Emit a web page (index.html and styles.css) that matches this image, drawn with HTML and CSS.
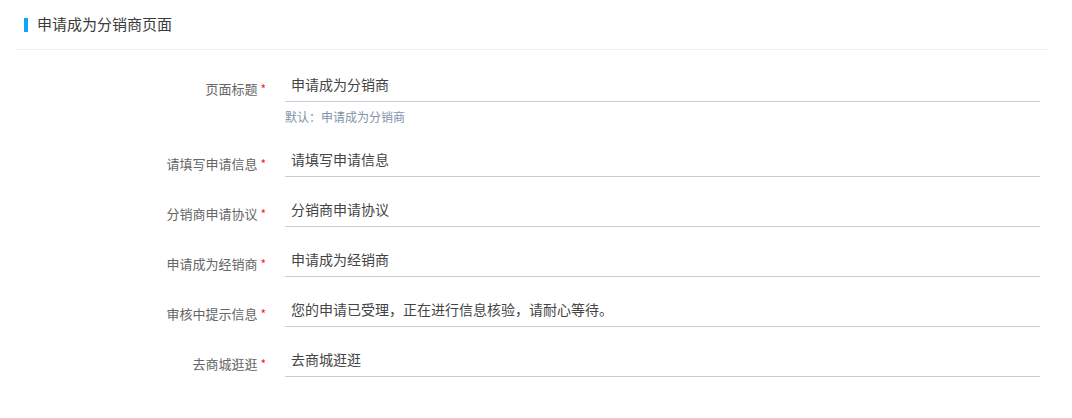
FILE: index.html
```html
<!DOCTYPE html>
<html>
  <head>
    <link rel="stylesheet" href="styles.css">
  </head>
  <body>
    <div class="page">
      <div class="page-header">
        <span class="bar"></span>
        <span class="title">申请成为分销商页面</span>
      </div>

      <form class="form">
        <div class="form-item">
          <label class="label">页面标题 <i>*</i></label>
          <div class="field">
            <input type="text" value="申请成为分销商" />
            <div class="hint">默认：申请成为分销商</div>
          </div>
        </div>
        <div class="form-item">
          <label class="label">请填写申请信息 <i>*</i></label>
          <div class="field"><input type="text" value="请填写申请信息" /></div>
        </div>
        <div class="form-item">
          <label class="label">分销商申请协议 <i>*</i></label>
          <div class="field"><input type="text" value="分销商申请协议" /></div>
        </div>
        <div class="form-item">
          <label class="label">申请成为经销商 <i>*</i></label>
          <div class="field"><input type="text" value="申请成为经销商" /></div>
        </div>
        <div class="form-item">
          <label class="label">审核中提示信息 <i>*</i></label>
          <div class="field"><input type="text" value="您的申请已受理，正在进行信息核验，请耐心等待。" /></div>
        </div>
        <div class="form-item">
          <label class="label">去商城逛逛 <i>*</i></label>
          <div class="field"><input type="text" value="去商城逛逛" /></div>
        </div>
      </form>
    </div>
  </body>
</html>
```

FILE: styles.css
```css
body {
  margin: 0;
  font-family: "Noto Sans CJK SC", "Liberation Sans", sans-serif;
  font-size: 13px;
  color: #333;
  background: #fff;
}
.page {
  padding: 0 24px 0 16px;
}
.page-header {
  display: flex;
  align-items: center;
  height: 49px;
  padding-left: 8px;
  border-bottom: 1px solid #eef0f3;
}
.bar {
  width: 4px;
  height: 14px;
  background-color: #0ea5f6;
  margin-right: 9px;
}
.title {
  font-size: 15px;
  color: #3a3a3a;
  margin-top: -2px;
}
.form {
  padding: 19px 8px 0 0;
}
.form-item {
  display: flex;
  margin-bottom: 17px;
}
.label {
  width: 250px;
  flex-shrink: 0;
  text-align: right;
  padding-top: 10px;
  line-height: 20px;
  color: #666;
  font-size: 13px;
  margin-right: 19px;
}
.label i {
  font-style: normal;
  color: #f5222d;
  font-size: 12px;
}
.field {
  flex: 1;
}
input[type="text"] {
  display: block;
  width: 100%;
  box-sizing: border-box;
  height: 33px;
  padding: 0 6px 2px;
  border: none;
  border-bottom: 1px solid #c5ccda;
  font-family: inherit;
  font-size: 14px;
  color: #444;
  outline: none;
  background: transparent;
}
input[type="text"]:focus {
  border-bottom-color: #0ea5f6;
}
.hint {
  padding-top: 5px;
  line-height: 20px;
  height: 25px;
  box-sizing: border-box;
  font-size: 12px;
  color: #8493ab;
}
```
